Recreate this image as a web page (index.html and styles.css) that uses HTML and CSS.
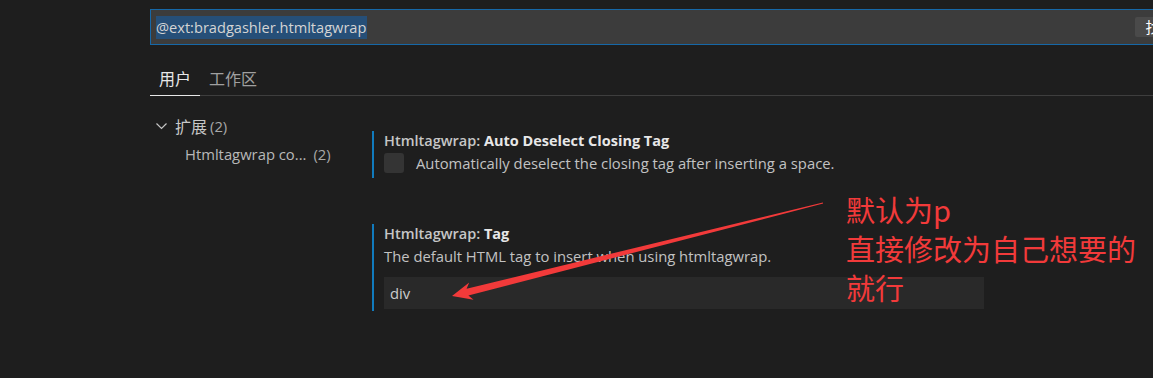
FILE: index.html
```html
<!DOCTYPE html>
<html lang="zh-CN">
<head>
<meta charset="utf-8">
<title>Settings</title>
<link rel="stylesheet" href="styles.css">
</head>
<body>
<div class="page">
  <div class="search">
    <span class="search-text">@ext:bradgashler.htmltagwrap</span>
    <span class="count zh">找</span>
  </div>
  <div class="tabs">
    <div class="tab active zh">用户</div>
    <div class="tab zh">工作区</div>
  </div>
  <div class="main">
    <div class="tree">
      <div class="tree-row">
        <svg class="chev" width="16" height="16" viewBox="0 0 16 16"><polyline points="3.5,5.5 8.5,10.5 13.5,5.5" fill="none" stroke="#c5c5c5" stroke-width="1.2"/></svg>
        <span class="zh tree-label">扩展</span><span class="tree-count">(2)</span>
      </div>
      <div class="tree-row sub">
        <span class="tree-name">Htmltagwrap co...</span><span class="tree-count">(2)</span>
      </div>
    </div>
    <div class="settings">
      <div class="setting">
        <div class="title"><span class="cat">Htmltagwrap: </span><span class="key">Auto Deselect Closing Tag</span></div>
        <div class="check-row">
          <span class="checkbox"></span>
          <span class="desc">Automatically deselect the closing tag after inserting a space.</span>
        </div>
      </div>
      <div class="setting second">
        <div class="title"><span class="cat">Htmltagwrap: </span><span class="key">Tag</span></div>
        <div class="desc line">The default HTML tag to insert when using htmltagwrap.</div>
        <div class="input">div</div>
      </div>
    </div>
  </div>
</div>
<svg class="arrow" width="1153" height="378" viewBox="0 0 1153 378">
  <polygon points="452,296 469.2,282.4 466.6,288.7 822.9,202.4 823.1,203.6 468.4,295.5 473.6,299.8" fill="#f23a3a"/>
</svg>
<div class="note zh">默认为p<br>直接修改为自己想要的<br>就行</div>
</body>
</html>
```
FILE: styles.css
```css
html, body {
  margin: 0;
  padding: 0;
  background: #1e1e1e;
  overflow: hidden;
  width: 1153px;
  height: 378px;
}
body {
  font-family: "Open Sans", "Noto Sans CJK SC", sans-serif;
  font-size: 14.8px;
  color: #cccccc;
  position: relative;
}
.zh {
  font-family: "Noto Sans CJK SC", sans-serif;
}
.page {
  padding-left: 150px;
}
.search {
  margin-top: 9px;
  width: 1100px;
  height: 36px;
  box-sizing: border-box;
  border: 1px solid #1668a8;
  background: #3c3c3c;
  display: flex;
  align-items: center;
  padding-left: 5px;
}
.search-text {
  background: #264f78;
  color: #d4d4d4;
  font-size: 14.6px;
  height: 23px;
  line-height: 23px;
  padding-right: 1px;
}
.count {
  margin-left: 768px;
  width: 50px;
  background: #4a4a4a;
  color: #ffffff;
  font-size: 15px;
  height: 20px;
  line-height: 20px;
  padding: 0 8px 0 10px;
  border-radius: 2px;
  white-space: nowrap;
}
.tabs {
  display: flex;
  margin-top: 16px;
  border-bottom: 1px solid #3e3e3e;
}
.tab {
  font-size: 16px;
  line-height: 34px;
  height: 34px;
  padding: 0 9px;
  color: #a0a0a0;
  border-bottom: 1px solid transparent;
  margin-bottom: -1px;
}
.tab.active {
  color: #e7e7e7;
  border-bottom-color: #e7e7e7;
}
.main {
  display: flex;
}
.tree {
  width: 222px;
  padding-top: 16px;
}
.tree-row {
  display: flex;
  align-items: center;
  height: 28px;
  color: #c8c8c8;
}
.chev {
  margin-left: 3px;
  margin-right: 6px;
  flex: none;
}
.tree-label {
  font-size: 16px;
}
.tree-count {
  margin-left: 3px;
  color: #a8a8a8;
}
.tree-row.sub {
  padding-left: 35px;
  color: #b8b8b8;
}
.tree-row.sub .tree-count {
  margin-left: 7px;
}
.settings {
  padding-top: 35px;
  flex: 1;
}
.setting {
  border-left: 2px solid #117bbd;
  padding-left: 10px;
  padding-bottom: 5px;
}
.setting.second {
  margin-top: 46px;
  padding-bottom: 2px;
}
.title {
  font-size: 14.5px;
  line-height: 20px;
  font-weight: 600;
  color: #c6c6c6;
}
.title .key {
  font-weight: 700;
  color: #e7e7e7;
}
.check-row {
  display: flex;
  align-items: center;
  margin-top: 2px;
  height: 20px;
}
.checkbox {
  width: 20px;
  height: 20px;
  border-radius: 3px;
  background: #343434;
  margin-right: 12px;
  flex: none;
}
.desc {
  color: #c2c2c2;
}
.desc.line {
  line-height: 20px;
  margin-top: 2px;
}
.input {
  margin-top: 11px;
  width: 600px;
  height: 32px;
  box-sizing: border-box;
  background: #292929;
  padding-left: 6px;
  line-height: 32px;
  color: #cccccc;
}
.arrow {
  position: absolute;
  left: 0;
  top: 0;
  pointer-events: none;
}
.note {
  position: absolute;
  left: 846px;
  top: 190px;
  font-size: 29px;
  line-height: 39px;
  color: #f23a3a;
  white-space: nowrap;
}
```
